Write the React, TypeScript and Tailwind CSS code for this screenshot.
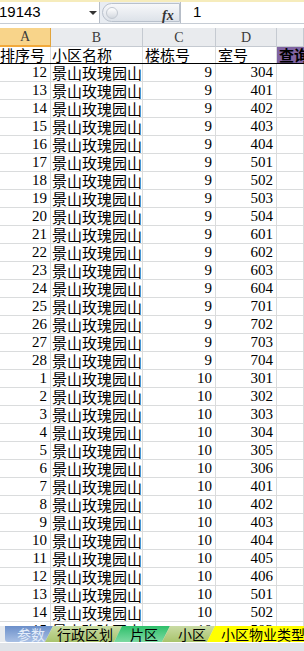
import React from "react";

const cjk = "font-['Noto_Sans_CJK_SC','Noto_Sans',sans-serif]";
const num = "font-['Liberation_Serif','Noto_Sans_CJK_SC',serif]";

const rows: [number, number, number][] = [
  [12, 9, 304], [13, 9, 401], [14, 9, 402], [15, 9, 403], [16, 9, 404],
  [17, 9, 501], [18, 9, 502], [19, 9, 503], [20, 9, 504], [21, 9, 601],
  [22, 9, 602], [23, 9, 603], [24, 9, 604], [25, 9, 701], [26, 9, 702],
  [27, 9, 703], [28, 9, 704], [1, 10, 301], [2, 10, 302], [3, 10, 303],
  [4, 10, 304], [5, 10, 305], [6, 10, 306], [7, 10, 401], [8, 10, 402],
  [9, 10, 403], [10, 10, 404], [11, 10, 405], [12, 10, 406], [13, 10, 501],
  [14, 10, 502], [15, 10, 503],
];

const grid = "grid grid-cols-[51px_92px_73px_61px_1fr]";
const cell = "border-r border-b border-[#dadcdd] overflow-x-clip whitespace-nowrap";
const head =
  "h-[19px] shrink-0 flex items-center justify-center font-['Liberation_Serif',serif] text-[14px] text-[#3b3b3b] border-r border-b";

const FormulaBar = () => (
  <div className="h-[28px] shrink-0 bg-white flex flex-col">
    <div className="h-[2px] bg-[#f6ecbc]" />
    <div className="h-[22px] flex bg-[#e9edf2] border-b border-[#c6ccd4]">
      <div className="w-[100px] bg-white border-r border-[#b6bdc7] flex items-center relative">
        <span className="font-['Liberation_Sans',sans-serif] text-[15px] -ml-[1px] text-black">19143</span>
        <div className="absolute left-[89px] top-[9px] w-0 h-0 border-l-[4px] border-r-[4px] border-t-[4px] border-l-transparent border-r-transparent border-t-[#333]" />
      </div>
      <div className="w-[78px] ml-[2px] my-[1px] rounded-l-full border border-[#b9c1cc] bg-[linear-gradient(#f7f8fa,#dde2e9)] flex items-center relative">
        <div className="ml-[3px] w-[12px] h-[12px] rounded-full border border-[#c2c8d0] bg-[linear-gradient(#ffffff,#d3d8df)]" />
        <span className="absolute left-[59px] top-[1px] font-['Liberation_Serif',serif] italic font-bold text-[14px] text-[#333]">fx</span>
      </div>
      <div className="flex-1 bg-white border-l border-[#b6bdc7] flex items-center pl-[12px]">
        <span className="font-['Liberation_Sans',sans-serif] text-[15px] text-black">1</span>
      </div>
    </div>
    <div className="flex-1 bg-white" />
  </div>
);

const Tab = ({
  label,
  first,
  w,
  pl,
  bg,
  text,
}: {
  label: string;
  first?: boolean;
  w: string;
  pl: string;
  bg: string;
  text: string;
}) => (
  <div
    className={
      "h-[16px] shrink-0 flex items-center leading-[16px] text-[14px] whitespace-nowrap " +
      cjk + " " + w + " " + pl + " " + bg + " " + text + " " +
      (first
        ? "[clip-path:polygon(0_0,100%_0,calc(100%-8px)_100%,0_100%)] rounded-bl-[3px]"
        : "-ml-[8px] [clip-path:polygon(8px_0,100%_0,calc(100%-8px)_100%,0_100%)]")
    }
  >
    {label}
  </div>
);

const App = () => {
  return (
    <div className="w-[304px] h-[651px] overflow-hidden flex flex-col bg-white">
      <FormulaBar />
      <div className="flex shrink-0 bg-[#e9ebee]">
        <div className={head + " w-[51px] bg-[#f8d48a] border-r-[#e2a43b] border-b-2 border-b-[#f2a93a]"}>A</div>
        <div className={head + " w-[92px] bg-[#e9ebee] border-[#c5cad1]"}>B</div>
        <div className={head + " w-[73px] bg-[#e9ebee] border-[#c5cad1]"}>C</div>
        <div className={head + " w-[61px] bg-[#e8eaed] border-[#c5cad1]"}>D</div>
        <div className={head + " flex-1 bg-[#e9ebee] border-[#c5cad1]"} />
      </div>
      <div className="flex-1 overflow-hidden">
        <div className={grid + " h-[17px] border-b border-black text-[15px] leading-[16px] text-black " + cjk}>
          <div className="border-r border-[#dadcdd] whitespace-nowrap overflow-x-clip">排序号</div>
          <div className="border-r border-[#dadcdd] whitespace-nowrap overflow-x-clip pl-[1px]">小区名称</div>
          <div className="border-r border-[#dadcdd] whitespace-nowrap overflow-x-clip pl-[2px]">楼栋号</div>
          <div className="border-r border-[#dadcdd] whitespace-nowrap overflow-x-clip pl-[2px]">室号</div>
          <div className="bg-[#8064a2] font-bold whitespace-nowrap overflow-x-clip pl-[2px]">查询</div>
        </div>
        {rows.map(([id, b, r], i) => (
          <div key={i} className={grid + " h-[18px] leading-[17px] text-black"}>
            <div className={cell + " " + num + " text-[15px] text-right pr-[3px]"}>{id}</div>
            <div className={cell + " " + cjk + " text-[15px] pl-[1px]"}>景山玫瑰园山</div>
            <div className={cell + " " + num + " text-[15px] text-right pr-[3px]"}>{b}</div>
            <div className={cell + " " + num + " text-[15px] text-right pr-[3px]"}>{r}</div>
            <div className={cell} />
          </div>
        ))}
      </div>
      <div className="h-[17px] shrink-0 flex bg-[#e8ebef] pl-[5px] border-b border-white">
        <Tab label="参数" first w="w-[48px]" pl="pl-[12px]" bg="bg-[linear-gradient(#6b8fca,#a9c0e4)]" text="text-[#e4edf9]" />
        <Tab label="行政区划" w="w-[77px]" pl="pl-[12px]" bg="bg-[linear-gradient(#c9dba4,#a9c46d)]" text="text-black" />
        <Tab label="片区" w="w-[56px]" pl="pl-[16px]" bg="bg-[linear-gradient(#2fc06b,#7cd9a2)]" text="text-black" />
        <Tab label="小区" w="w-[53px]" pl="pl-[16px]" bg="bg-[linear-gradient(#c9dba4,#a9c46d)]" text="text-black" />
        <Tab label="小区物业类型" w="w-[110px]" pl="pl-[14px]" bg="bg-[#ffff00]" text="text-black" />
      </div>
      <div className="h-[8px] shrink-0 bg-[#dfe3e8]" />
    </div>
  );
};

export default App;
